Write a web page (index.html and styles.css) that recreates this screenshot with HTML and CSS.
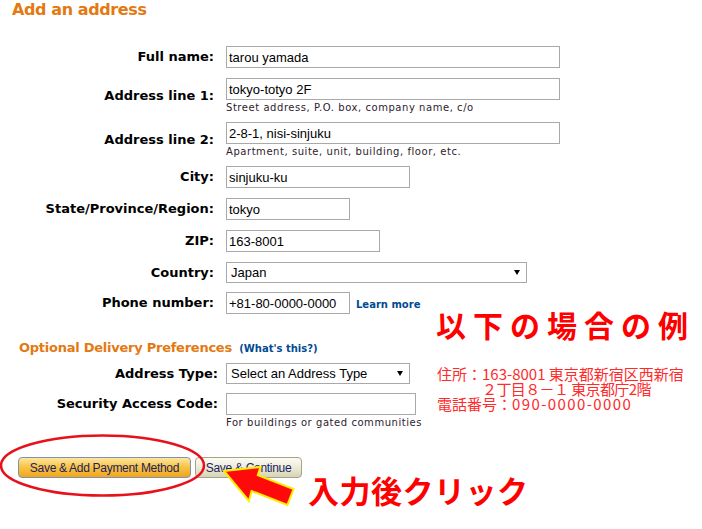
FILE: index.html
```html
<!DOCTYPE html>
<html lang="en">
<head>
<meta charset="utf-8">
<title>Add an address</title>
<link rel="stylesheet" href="styles.css">
</head>
<body>
<div class="page">
  <h1 class="title">Add an address</h1>

  <div class="form form-main">
    <div class="row">
      <div class="label">Full name:</div>
      <div class="field"><input class="input w-long" type="text" value="tarou yamada"></div>
    </div>
    <div class="row row-hint">
      <div class="label">Address line 1:</div>
      <div class="field">
        <input class="input w-long" type="text" value="tokyo-totyo 2F">
        <div class="hint">Street address, P.O. box, company name, c/o</div>
      </div>
    </div>
    <div class="row row-hint">
      <div class="label">Address line 2:</div>
      <div class="field">
        <input class="input w-long" type="text" value="2-8-1, nisi-sinjuku">
        <div class="hint">Apartment, suite, unit, building, floor, etc.</div>
      </div>
    </div>
    <div class="row">
      <div class="label">City:</div>
      <div class="field"><input class="input w-city" type="text" value="sinjuku-ku"></div>
    </div>
    <div class="row">
      <div class="label">State/Province/Region:</div>
      <div class="field"><input class="input w-state" type="text" value="tokyo"></div>
    </div>
    <div class="row">
      <div class="label">ZIP:</div>
      <div class="field"><input class="input w-zip" type="text" value="163-8001"></div>
    </div>
    <div class="row row-select">
      <div class="label">Country:</div>
      <div class="field">
        <div class="select-wrap">
          <select class="select w-country"><option>Japan</option></select>
          <span class="caret"></span>
        </div>
      </div>
    </div>
    <div class="row row-last">
      <div class="label">Phone number:</div>
      <div class="field-inline">
        <input class="input w-state" type="text" value="+81-80-0000-0000">
        <a class="link" href="#">Learn more</a>
      </div>
    </div>
  </div>

  <h2 class="section">Optional Delivery Preferences <a class="link link-what" href="#">(What's this?)</a></h2>

  <div class="form form-opt">
    <div class="row row-select">
      <div class="label">Address Type:</div>
      <div class="field">
        <div class="select-wrap">
          <select class="select w-type"><option>Select an Address Type</option></select>
          <span class="caret"></span>
        </div>
      </div>
    </div>
    <div class="row row-top">
      <div class="label label-input">Security Access Code:</div>
      <div class="field">
        <input class="input w-sac" type="text" value="">
        <div class="hint">For buildings or gated communities</div>
      </div>
    </div>
  </div>

  <div class="buttons">
    <button class="btn btn-primary" type="button">Save &amp; Add Payment Method</button>
    <button class="btn btn-secondary" type="button">Save &amp; Continue</button>
  </div>

  <svg class="overlay" width="702" height="529" viewBox="0 0 702 529" aria-hidden="true">
    <ellipse cx="102.5" cy="465.5" rx="101.5" ry="30" fill="none" stroke="#e8111b" stroke-width="2.5"/>
    <polygon points="224,471 260.5,467 257.8,475.2 293.6,489.1 287.4,504.9 251.6,491 249,501" fill="#ff0a0a" stroke="#ffee00" stroke-width="2" stroke-linejoin="miter"/>
  </svg>

  <div class="note note-title">以下の場合の例</div>
  <div class="note note-addr">
    <div>住所：163-8001 東京都新宿区西新宿</div>
    <div class="indent">２丁目８－１ 東京都庁2階</div>
    <div>電話番号：<span class="digits">090-0000-0000</span></div>
  </div>
  <div class="note note-click">入力後クリック</div>
</div>
</body>
</html>
```

FILE: styles.css
```css
html, body {
  margin: 0;
  padding: 0;
  background: #ffffff;
}

body {
  font-family: "DejaVu Sans", Verdana, sans-serif;
  color: #000000;
}

.page {
  position: relative;
  width: 702px;
  height: 529px;
  overflow: hidden;
}

.title {
  margin: 0;
  padding-left: 12px;
  font-size: 16px;
  font-weight: bold;
  line-height: 20px;
  letter-spacing: -0.4px;
  color: #e47911;
}

.form-main {
  margin-top: 26px;
}

.row {
  display: flex;
  align-items: center;
  margin-bottom: 10px;
}

.row-hint {
  margin-bottom: 8px;
}

.row-select {
  margin-bottom: 9px;
}

.row-last {
  margin-bottom: 26px;
}

.row-top {
  align-items: flex-start;
  margin-bottom: 28px;
}

.label {
  flex: none;
  width: 214px;
  margin-right: 12px;
  text-align: right;
  font-size: 13px;
  font-weight: bold;
  line-height: 16px;
  white-space: nowrap;
}

.form-opt .label {
  width: 218px;
  margin-right: 8px;
}

.label-input {
  line-height: 22px;
}

.field {
  display: flex;
  flex-direction: column;
  align-items: flex-start;
}

.field-inline {
  display: flex;
  align-items: baseline;
  gap: 6px;
}

.input {
  box-sizing: border-box;
  height: 22px;
  margin: 0;
  padding: 0 2px;
  border: 1px solid #a9a9a9;
  border-radius: 0;
  background: #ffffff;
  font: 13px "Liberation Sans", Arial, sans-serif;
  color: #000000;
  outline: none;
}

.w-long { width: 334px; }
.w-city { width: 184px; }
.w-state { width: 124px; }
.w-zip { width: 154px; }
.w-sac { width: 190px; }
.w-country { width: 301px; }
.w-type { width: 184px; }

.hint {
  padding-top: 2px;
  font-size: 10px;
  line-height: 12px;
  letter-spacing: 0.55px;
  color: #2e222e;
  white-space: nowrap;
}

.select-wrap {
  display: grid;
  align-items: center;
}

.select-wrap > * {
  grid-area: 1 / 1;
}

.select {
  -webkit-appearance: none;
  appearance: none;
  box-sizing: border-box;
  height: 21px;
  margin: 0;
  padding: 0 0 0 4px;
  border: 1px solid #a9a9a9;
  border-radius: 0;
  background: #ffffff;
  font: 13px "Liberation Sans", Arial, sans-serif;
  color: #000000;
  outline: none;
}

.caret {
  justify-self: end;
  margin-right: 7px;
  width: 0;
  height: 0;
  border-left: 3px solid transparent;
  border-right: 3px solid transparent;
  border-top: 5px solid #000000;
  pointer-events: none;
}

.link {
  font-size: 10px;
  font-weight: bold;
  color: #004b91;
  text-decoration: none;
}

.section {
  margin: 0 0 6px;
  padding-left: 19px;
  font-size: 13px;
  font-weight: bold;
  line-height: 16px;
  letter-spacing: -0.25px;
  color: #e47911;
}

.link-what {
  margin-left: 3px;
  letter-spacing: 0;
}

.buttons {
  display: flex;
  gap: 4px;
  padding-left: 18px;
}

.btn {
  box-sizing: border-box;
  height: 21px;
  margin: 0;
  padding: 0;
  border-radius: 4px;
  font: 12px "Liberation Sans", Arial, sans-serif;
  letter-spacing: -0.3px;
  color: #1b2366;
  cursor: pointer;
}

.btn-primary {
  width: 173px;
  border: 1px solid #7f93b0;
  background: linear-gradient(#fde7a0 0%, #f9c547 45%, #f0a51c 100%);
}

.btn-secondary {
  width: 107px;
  border: 1px solid #a7a48c;
  background: linear-gradient(#fcfcf5 0%, #ebe9d5 55%, #d6d3b3 100%);
}

.overlay {
  position: absolute;
  left: 0;
  top: 0;
  pointer-events: none;
}

.note {
  position: absolute;
  font-family: "Noto Sans CJK JP", "Noto Sans CJK SC", sans-serif;
  white-space: nowrap;
}

.note-title {
  left: 436px;
  top: 309px;
  font-size: 30px;
  line-height: 30px;
  font-weight: 700;
  letter-spacing: 7px;
  color: #ff0000;
}

.note-addr {
  left: 437px;
  top: 366px;
  font-size: 15px;
  line-height: 15px;
  color: #ff2b2b;
}

.indent {
  padding-left: 45px;
  letter-spacing: -0.6px;
}

.digits {
  letter-spacing: 1.4px;
}

.note-click {
  left: 308px;
  top: 474px;
  font-size: 31px;
  line-height: 31px;
  font-weight: 700;
  letter-spacing: 0.5px;
  color: #ff0000;
}
```
